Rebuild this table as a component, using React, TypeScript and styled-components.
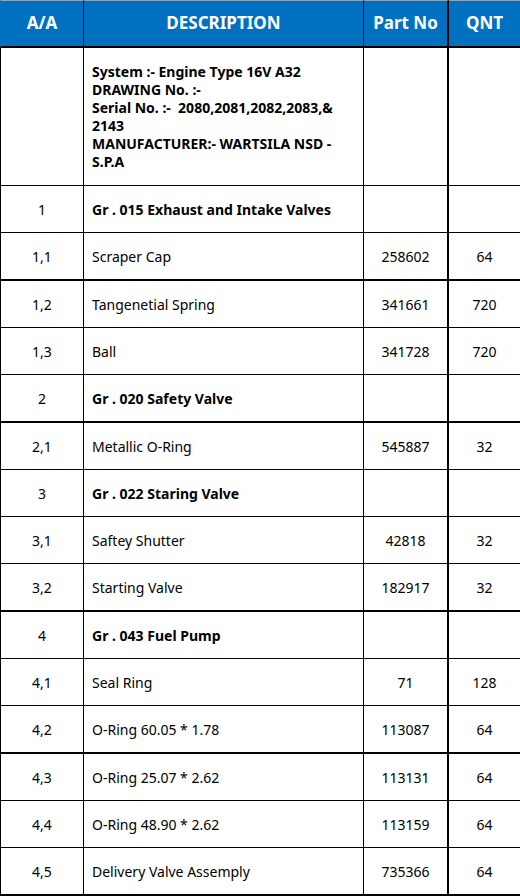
import React from "react";
import styled, { createGlobalStyle } from "styled-components";

const Global = createGlobalStyle`
  html, body { margin: 0; padding: 0; background: #ffffff; }
  body { font-family: "Noto Sans", "Open Sans", "DejaVu Sans", sans-serif; }
`;

const Table = styled.table`
  border-collapse: separate;
  border-spacing: 0;
  table-layout: fixed;
  width: 520px;
  color: #000;
`;

const HeadCell = styled.th<{ $w: number; $last?: boolean; $first?: boolean }>`
  width: ${(p) => p.$w}px;
  box-sizing: border-box;
  height: 48px;
  padding: 0 0 2px;
  background: #0070c0;
  color: #fff;
  font-size: 17px;
  font-weight: 700;
  text-align: center;
  vertical-align: middle;
  border-top: 1px solid #8fa3b8;
  border-bottom: 2px solid #000;
  border-left: ${(p) => (p.$first ? "1px solid #0070c0" : "0")};
  border-right: ${(p) => (p.$last ? "0" : "1px solid #000")};
  &:nth-child(3) { border-right-width: 2px; }
`;

const Cell = styled.td<{ $thick?: boolean; $align?: "left" | "center"; $bold?: boolean; $h: number }>`
  box-sizing: border-box;
  height: ${(p) => p.$h + (p.$thick ? 2 : 1)}px;
  padding: 0 8px;
  font-size: 14px;
  font-weight: ${(p) => (p.$bold ? 700 : 400)};
  text-align: ${(p) => p.$align ?? "center"};
  vertical-align: middle;
  border-bottom: ${(p) => (p.$thick ? 2 : 1)}px solid #000;
  border-right: 1px solid #000;
  &:first-child { border-left: 1px solid #000; }
  &:nth-child(3) { border-right-width: 2px; }
  &:last-child { border-right: 0; }
`;

const InfoText = styled.div`
  font-size: 14px;
  font-weight: 700;
  line-height: 18px;
  padding-right: 4px;
`;

type Row = { aa: string; desc: string; part?: string; qnt?: string; group?: boolean; thick?: boolean };

const rows: Row[] = [
  { aa: "1", desc: "Gr . 015 Exhaust and Intake Valves", group: true },
  { aa: "1,1", desc: "Scraper Cap", part: "258602", qnt: "64", thick: true },
  { aa: "1,2", desc: "Tangenetial Spring", part: "341661", qnt: "720" },
  { aa: "1,3", desc: "Ball", part: "341728", qnt: "720" },
  { aa: "2", desc: "Gr . 020 Safety Valve", group: true, thick: true },
  { aa: "2,1", desc: "Metallic O-Ring", part: "545887", qnt: "32" },
  { aa: "3", desc: "Gr . 022 Staring Valve", group: true },
  { aa: "3,1", desc: "Saftey Shutter", part: "42818", qnt: "32" },
  { aa: "3,2", desc: "Starting Valve", part: "182917", qnt: "32", thick: true },
  { aa: "4", desc: "Gr . 043 Fuel Pump", group: true },
  { aa: "4,1", desc: "Seal Ring", part: "71", qnt: "128" },
  { aa: "4,2", desc: "O-Ring 60.05 * 1.78", part: "113087", qnt: "64", thick: true },
  { aa: "4,3", desc: "O-Ring 25.07 * 2.62", part: "113131", qnt: "64" },
  { aa: "4,4", desc: "O-Ring 48.90 * 2.62", part: "113159", qnt: "64" },
  { aa: "4,5", desc: "Delivery Valve Assemply", part: "735366", qnt: "64", thick: true },
];

export default function App() {
  return (
    <>
      <Global />
      <Table>
        <thead>
          <tr>
            <HeadCell $w={84} $first>A/A</HeadCell>
            <HeadCell $w={280}>DESCRIPTION</HeadCell>
            <HeadCell $w={85}>Part No</HeadCell>
            <HeadCell $w={71} $last>QNT</HeadCell>
          </tr>
        </thead>
        <tbody>
          <tr>
            <Cell $h={137}></Cell>
            <Cell $h={137} $align="left">
              <InfoText>
                System :- Engine Type 16V A32
                <br />
                DRAWING No. :-
                <br />
                Serial No. :-&nbsp;&nbsp;2080,2081,2082,2083,&amp; 2143
                <br />
                MANUFACTURER:- WARTSILA NSD - S.P.A
              </InfoText>
            </Cell>
            <Cell $h={137}></Cell>
            <Cell $h={137}></Cell>
          </tr>
          {rows.map((r) => (
            <tr key={r.aa}>
              <Cell $h={46} $thick={r.thick}>{r.aa}</Cell>
              <Cell $h={46} $thick={r.thick} $align="left" $bold={r.group}>
                {r.desc}
              </Cell>
              <Cell $h={46} $thick={r.thick}>{r.part ?? ""}</Cell>
              <Cell $h={46} $thick={r.thick}>{r.qnt ?? ""}</Cell>
            </tr>
          ))}
        </tbody>
      </Table>
    </>
  );
}
